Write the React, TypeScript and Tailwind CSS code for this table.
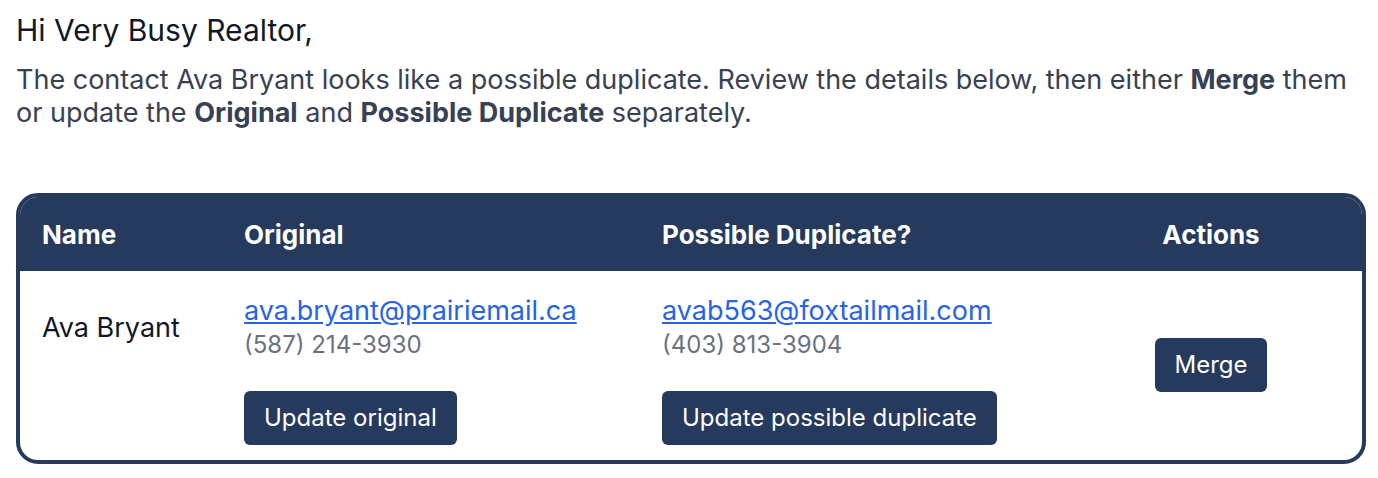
export default function App() {
    return (
        <div className="min-h-screen bg-white pl-4 pt-[12px] text-gray-700" style={{ fontFamily: "Inter, 'Noto Sans', sans-serif" }}>
            <p className="text-[30px] leading-[36px] text-gray-900">Hi Very Busy Realtor,</p>
            <p className="mt-[15px] w-[1350px] text-[27px] leading-[33px] text-gray-700">
                The contact Ava Bryant looks like a possible duplicate. Review the details below, then either <b>Merge</b> them
                <br />
                or update the <b>Original</b> and <b>Possible Duplicate</b> separately.
            </p>

            <div className="mt-[64px] w-[1350px] overflow-hidden rounded-[22px] border-4 border-[#263a5d]">
                <div className="grid h-[74px] grid-cols-[202px_418px_420px_1fr] items-center bg-[#263a5d] text-[26px] font-bold text-white">
                    <div className="pl-[22px]">Name</div>
                    <div className="pl-[22px]">Original</div>
                    <div className="pl-[22px]">Possible Duplicate?</div>
                    <div className="text-center">Actions</div>
                </div>
                <div className="grid grid-cols-[202px_418px_420px_1fr] items-center pt-[23px] pb-[15px]">
                    <div className="self-start pl-[22px] pt-[17px] text-[27px] leading-[34px] text-gray-900">Ava Bryant</div>
                    <Contact email="ava.bryant@prairiemail.ca" phone="(587) 214-3930" label="Update original" />
                    <Contact email="avab563@foxtailmail.com" phone="(403) 813-3904" label="Update possible duplicate" />
                    <div className="mb-[10px] flex justify-center">
                        <button className="h-[54px] rounded-md bg-[#263a5d] px-[19px] text-[24px] text-white">Merge</button>
                    </div>
                </div>
            </div>
        </div>
    );
}

function Contact({ email, phone, label }: { email: string; phone: string; label: string }) {
    return (
        <div className="pl-[22px]">
            <a href="#" className="block text-[27px] leading-[34px] text-[#2563eb] underline">{email}</a>
            <div className="text-[24px] leading-[34px] text-gray-500">{phone}</div>
            <button className="mt-[29px] h-[54px] rounded-md bg-[#263a5d] px-5 text-[24px] text-white">{label}</button>
        </div>
    );
}
